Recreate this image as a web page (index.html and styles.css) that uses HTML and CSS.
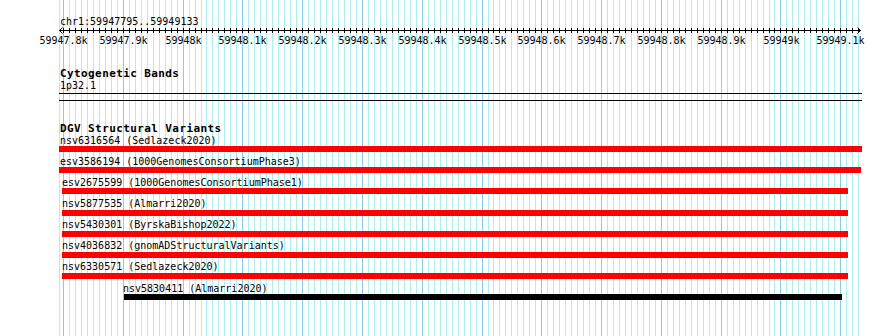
FILE: index.html
```html
<!DOCTYPE html>
<html>
<head>
<meta charset="utf-8">
<link rel="stylesheet" href="styles.css">
</head>
<body>
<div class="page">
  <svg class="grid" width="890" height="336" xmlns="http://www.w3.org/2000/svg">
    <g id="minor" class="minor"></g>
    <g id="major" class="major"></g>
    <g id="ticks" class="ticks"></g>
    <rect class="axis" x="59" y="30" width="802" height="1"/>
    <polyline class="arrow" points="62.5,27.5 59.5,30.5 62.5,33.5"/>
    <polyline class="arrow" points="857.5,27.5 860.5,30.5 857.5,33.5"/>
  </svg>
  <div class="content">
    <div class="ruler">
      <div class="loc">chr1:59947795..59949133</div>
      <span class="tick-label" style="left:63.5px">59947.8k</span>
      <span class="tick-label" style="left:123.5px">59947.9k</span>
      <span class="tick-label" style="left:183.5px">59948k</span>
      <span class="tick-label" style="left:242.5px">59948.1k</span>
      <span class="tick-label" style="left:302.5px">59948.2k</span>
      <span class="tick-label" style="left:362.5px">59948.3k</span>
      <span class="tick-label" style="left:422.5px">59948.4k</span>
      <span class="tick-label" style="left:482.5px">59948.5k</span>
      <span class="tick-label" style="left:541.5px">59948.6k</span>
      <span class="tick-label" style="left:601.5px">59948.7k</span>
      <span class="tick-label" style="left:661.5px">59948.8k</span>
      <span class="tick-label" style="left:721.5px">59948.9k</span>
      <span class="tick-label" style="left:781.5px">59949k</span>
      <span class="tick-label" style="left:840.5px">59949.1k</span>
    </div>
    <section class="track cyto">
      <div class="track-title">Cytogenetic Bands</div>
      <div class="band-label">1p32.1</div>
      <div class="band"></div>
    </section>
    <section class="track dgv">
      <div class="track-title">DGV Structural Variants</div>
      <div class="feature clipped" style="margin-left:59px;width:803px">
        <div class="flabel">nsv6316564 (Sedlazeck2020)</div>
        <div class="fbar"></div>
      </div>
      <div class="feature clipped" style="margin-left:59px;width:802px">
        <div class="flabel">esv3586194 (1000GenomesConsortiumPhase3)</div>
        <div class="fbar"></div>
      </div>
      <div class="feature" style="margin-left:62px;width:786px">
        <div class="flabel">esv2675599 (1000GenomesConsortiumPhase1)</div>
        <div class="fbar"></div>
      </div>
      <div class="feature" style="margin-left:62px;width:786px">
        <div class="flabel">nsv5877535 (Almarri2020)</div>
        <div class="fbar"></div>
      </div>
      <div class="feature" style="margin-left:62px;width:786px">
        <div class="flabel">nsv5430301 (ByrskaBishop2022)</div>
        <div class="fbar"></div>
      </div>
      <div class="feature" style="margin-left:62px;width:786px">
        <div class="flabel">nsv4036832 (gnomADStructuralVariants)</div>
        <div class="fbar"></div>
      </div>
      <div class="feature" style="margin-left:62px;width:786px">
        <div class="flabel">nsv6330571 (Sedlazeck2020)</div>
        <div class="fbar"></div>
      </div>
      <div class="feature shifted" style="margin-left:124px;width:718px">
        <div class="flabel">nsv5830411 (Almarri2020)</div>
        <div class="fbar black"></div>
      </div>
    </section>
  </div>
</div>
<script src="script.js"></script>
</body>
</html>
```

FILE: styles.css
```css
* { box-sizing: border-box; }
html, body { margin: 0; padding: 0; background: #fff; }
body {
  font-family: "DejaVu Sans Mono", "Liberation Mono", monospace;
  font-size: 10px;
  color: #000;
}
.page { position: relative; width: 890px; height: 336px; overflow: hidden; }
.grid { position: absolute; left: 0; top: 0; }
.minor { fill: #aeeeee; }
.major { fill: #87ceeb; }
.ticks, .axis { fill: #000; }
.arrow { fill: none; stroke: #000; stroke-width: 1; }
.content { position: relative; }
.ruler { position: relative; height: 48px; }
.loc { padding: 15.5px 0 0 60px; line-height: 12px; }
.tick-label {
  position: absolute;
  top: 34.5px;
  line-height: 12px;
  transform: translateX(-50%);
  white-space: nowrap;
}
.track-title {
  font-weight: bold;
  font-size: 11px;
  letter-spacing: 0.4px;
  line-height: 13px;
  padding-left: 60px;
}
.cyto { margin-top: 19px; }
.band-label { padding-left: 60px; line-height: 12px; height: 12px; }
.band {
  margin: 1px 0 0 59px;
  width: 803px;
  height: 8px;
  border-top: 1px solid #000;
  border-bottom: 1px solid #000;
}
.dgv { margin-top: 20.7px; }
.feature { height: 21.14px; }
.flabel { line-height: 11.5px; height: 11.5px; white-space: nowrap; }
.clipped .flabel { padding-left: 1px; }
.shifted .flabel { margin-left: -1px; }
.fbar { height: 6px; background: #f00; }
.fbar.black { background: #000; }
```

FILE: script.js
```js
(function () {
  var ns = 'http://www.w3.org/2000/svg';
  var minor = document.getElementById('minor');
  var major = document.getElementById('major');
  var ticks = document.getElementById('ticks');
  function rect(g, x, y, w, h) {
    var r = document.createElementNS(ns, 'rect');
    r.setAttribute('x', x);
    r.setAttribute('y', y);
    r.setAttribute('width', w);
    r.setAttribute('height', h);
    g.appendChild(r);
  }
  var start = 59947795, end = 59949133, x0 = 60, width = 800;
  var s = width / (end - start);
  rect(minor, 59, 0, 1, 336);
  for (var bp = 59947800; bp <= 59949130; bp += 10) {
    var x = Math.round(x0 + (bp - start) * s);
    rect(bp % 100 === 0 ? major : minor, x, 0, 1, 336);
    rect(ticks, x, 28, 1, 5);
  }
})();
```
